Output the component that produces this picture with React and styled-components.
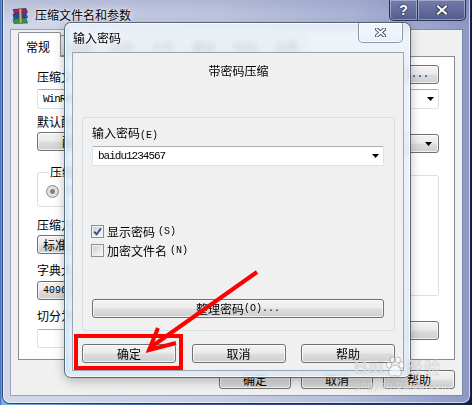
import React from 'react'
import styled, { createGlobalStyle } from 'styled-components'

const GlobalStyle = createGlobalStyle`
  html, body { margin: 0; padding: 0; }
  body {
    width: 472px;
    height: 405px;
    overflow: hidden;
    font-family: "Noto Sans CJK SC", "Liberation Sans", sans-serif;
    font-size: 12px;
    color: #000;
  }
`

const Desktop = styled.div`
  position: relative;
  width: 472px;
  height: 405px;
  overflow: hidden;
  background: linear-gradient(90deg, #2f66bb 0px, #7fb0ea 2px, #4a66a8 30%, #1c2a63 97%, #0f1846 100%);
`

/* ---------- outer WinRAR window ---------- */

const Window = styled.div`
  position: absolute;
  left: 3px;
  top: -8px;
  width: 467px;
  height: 411px;
  box-sizing: border-box;
  display: flex;
  flex-direction: column;
  padding: 0 8px 8px;
  border-radius: 7px;
  background:
    linear-gradient(180deg, rgba(70, 80, 140, 0.25) 0px, rgba(255, 255, 255, 0) 34px),
    linear-gradient(90deg, #d2d8ea 0%, #c8cfe5 45%, #b3bcdb 75%, #8d97c4 100%);
  box-shadow: 0 0 0 1px rgba(30, 40, 75, 0.8), inset 0 0 0 1px rgba(255, 255, 255, 0.6);
`

const TitleBar = styled.div`
  height: 38px;
  flex: none;
  box-sizing: border-box;
  padding-top: 8px;
  display: flex;
  align-items: flex-start;
`

const IconBox = styled.svg`
  margin: 8px 0 0 1px;
  flex: none;
`

const WindowTitle = styled.div`
  margin: 6px 0 0 6px;
  font-size: 12px;
  line-height: 17px;
  text-shadow: 0 0 6px rgba(255, 255, 255, 0.95), 0 0 2px rgba(255, 255, 255, 0.9);
`

const CaptionGroup = styled.div`
  margin-left: auto;
  margin-right: -4px;
  display: flex;
`

const CaptionButton = styled.div`
  width: ${p => p.$w}px;
  height: 21px;
  box-sizing: border-box;
  display: flex;
  align-items: center;
  justify-content: center;
  border: 1px solid rgba(35, 40, 75, 0.85);
  border-top: none;
  border-left-width: ${p => (p.$first ? 1 : 0)}px;
  border-radius: ${p => (p.$first ? '0 0 0 5px' : '0 0 5px 0')};
  background: linear-gradient(180deg, rgba(110, 118, 168, 0.8), rgba(72, 80, 132, 0.85));
  box-shadow: inset 0 0 0 1px rgba(255, 255, 255, 0.35);
  color: #fff;
  font: bold 14px "Liberation Sans", sans-serif;
  text-shadow: 0 0 2px #202840, 0 0 1px #202840;
`

const Client = styled.div`
  flex: 1;
  display: flex;
  flex-direction: column;
  background: #f0f0f0;
  padding: 2px 7px 6px;
  box-shadow: 0 0 0 1px rgba(110, 125, 160, 0.6);
`

const TabStrip = styled.div`
  height: 24px;
  display: flex;
  align-items: flex-end;
  position: relative;
`

const Tab = styled.div`
  position: relative;
  height: ${p => (p.$active ? 25 : 21)}px;
  box-sizing: border-box;
  padding: ${p => (p.$active ? '5px 10px 0 7px' : '2px 8px 0')};
  margin-left: ${p => (p.$active ? 0 : -1)}px;
  border: 1px solid #898c95;
  border-bottom: ${p => (p.$active ? 'none' : '1px solid #898c95')};
  border-radius: 2px 2px 0 0;
  background: ${p => (p.$active ? '#fff' : 'linear-gradient(180deg, #f2f2f2, #dcdcdc)')};
  line-height: 17px;
  margin-bottom: ${p => (p.$active ? -1 : 0)}px;
`

const TabPanel = styled.div`
  flex: 1;
  box-sizing: border-box;
  background: #fff;
  border: 1px solid #898c95;
  padding: 10px 15px 0 18px;
  display: flex;
  flex-direction: column;
`

const TopRow = styled.div`
  height: 17px;
  display: flex;
  justify-content: space-between;
  align-items: flex-end;
`

const Label = styled.div`
  line-height: ${p => p.$lh || 16}px;
  margin-top: ${p => p.$mt || 0}px;
  margin-bottom: ${p => p.$mb || 0}px;
  white-space: nowrap;
`

const Key = styled.span`
  font-family: "Liberation Mono", monospace;
  font-size: 10px;
`

const Columns = styled.div`
  margin-top: 5px;
  display: grid;
  grid-template-columns: 1fr 1fr;
  column-gap: 18px;
`

const Column = styled.div`
  display: flex;
  flex-direction: column;
  align-items: stretch;
  min-width: 0;
`

const Button = styled.div`
  height: 19px;
  width: ${p => (p.$w ? p.$w + 'px' : 'auto')};
  margin-top: ${p => p.$mt || 0}px;
  box-sizing: border-box;
  display: flex;
  align-items: center;
  justify-content: center;
  flex: none;
  border: 1px solid #707070;
  border-radius: 3px;
  background: linear-gradient(180deg, #f3f3f3 0%, #ebebeb 48%, #dddddd 52%, #cfcfcf 100%);
  box-shadow: inset 0 0 0 1px rgba(255, 255, 255, 0.75);
  line-height: 17px;
  white-space: nowrap;
`

const Select = styled(Button)`
  justify-content: space-between;
  padding: 0 6px 0 5px;
`

const Combo = styled.div`
  height: ${p => p.$h || 20}px;
  margin-top: ${p => p.$mt || 0}px;
  box-sizing: border-box;
  display: flex;
  align-items: center;
  justify-content: space-between;
  padding: 0 4px 0 5px;
  background: #fff;
  border: 1px solid #dde2e8;
  border-top-color: #abadb3;
  border-radius: 2px;
  font-family: "Liberation Mono", monospace;
  font-size: 11px;
  letter-spacing: -1px;
`

const Group = styled.fieldset`
  margin: ${p => p.$mt || 0}px 0 0;
  padding: 0 8px;
  height: ${p => p.$h}px;
  box-sizing: border-box;
  border: 1px solid #d5dfe5;
  border-radius: 3px;
  min-width: 0;
`

const Legend = styled.legend`
  padding: 0 2px;
  margin-left: 2px;
  line-height: 14px;
`

const RadioRow = styled.div`
  margin-top: 5px;
  display: flex;
  align-items: center;
  gap: 5px;
  line-height: 14px;
`

const Radio = styled.span`
  width: 13px;
  height: 13px;
  flex: none;
  border-radius: 50%;
  box-sizing: border-box;
  border: 1px solid #8e8f8f;
  background: radial-gradient(circle at 50% 50%, #7d8289 0 2px, #e8e8e8 3px, #c5c8cc 100%);
`

const OptionList = styled.div`
  display: flex;
  flex-direction: column;
  gap: 3px;
  padding-top: 4px;
`

const CheckRow = styled.div`
  display: flex;
  align-items: center;
  gap: 3px;
  height: 16px;
  margin-top: ${p => p.$mt || 0}px;
  margin-left: -1px;
  white-space: nowrap;
`

const Box = styled.span`
  width: 13px;
  height: 13px;
  flex: none;
  box-sizing: border-box;
  border: 1px solid #8e8f8f;
  background: linear-gradient(135deg, #c8ccd1 0%, #e6e7e9 55%, #f7f7f7 100%);
  box-shadow: inset 0 0 0 1px #f3f3f3;
  display: flex;
  align-items: center;
  justify-content: center;
`

const BottomRow = styled.div`
  margin-top: 10px;
  display: flex;
  justify-content: flex-end;
  gap: 10px;
`

/* ---------- password dialog ---------- */

const Dialog = styled.div`
  position: absolute;
  z-index: 2;
  left: 65px;
  top: 23px;
  width: 345px;
  height: 354px;
  box-sizing: border-box;
  display: flex;
  flex-direction: column;
  padding: 0 7px 7px 8px;
  border-radius: 6px;
  background:
    linear-gradient(90deg, rgba(150, 220, 255, 0.45) 0px, rgba(255, 255, 255, 0) 5px),
    linear-gradient(180deg, rgba(236, 243, 250, 0.82) 0%, rgba(220, 233, 246, 0.84) 100%);
  backdrop-filter: blur(3px);
  box-shadow: 0 0 0 1px rgba(75, 85, 100, 0.85), inset 0 0 0 1px rgba(255, 255, 255, 0.75), 0 3px 12px rgba(0, 0, 0, 0.3);
`

const DialogTitleBar = styled.div`
  height: 30px;
  flex: none;
  display: flex;
  align-items: flex-start;
`

const DialogTitle = styled.div`
  margin-top: 6px;
  line-height: 17px;
  text-shadow: 0 0 6px rgba(255, 255, 255, 0.95);
`

const CloseButton = styled.div`
  margin-left: auto;
  width: 45px;
  height: 20px;
  box-sizing: border-box;
  display: flex;
  align-items: center;
  justify-content: center;
  border: 1px solid rgba(90, 100, 115, 0.65);
  border-top: none;
  border-radius: 0 0 5px 5px;
  background: linear-gradient(180deg, rgba(255, 255, 255, 0.55), rgba(225, 238, 250, 0.6));
  box-shadow: inset 0 0 0 1px rgba(255, 255, 255, 0.6);
`

const DialogClient = styled.div`
  flex: 1;
  display: flex;
  flex-direction: column;
  background: #f0f0f0;
  padding: 10px 8px 7px 9px;
  box-shadow: 0 0 0 1px rgba(125, 140, 160, 0.75);
`

const Heading = styled.div`
  text-align: center;
  line-height: 16px;
`

const PasswordGroup = styled.div`
  flex: 1;
  margin-top: 38px;
  display: flex;
  flex-direction: column;
  border: 1px solid #d5dfe5;
  border-radius: 3px;
  padding: 7px 10px 12px 9px;
`

const DialogButtons = styled.div`
  margin-top: 13px;
  display: flex;
  justify-content: space-between;
`

/* ---------- overlays ---------- */

const Annotation = styled.svg`
  position: absolute;
  z-index: 3;
  left: 0;
  top: 0;
  pointer-events: none;
`

const Watermark = styled.div`
  position: absolute;
  z-index: 3;
  left: 354px;
  top: 354px;
  display: flex;
  flex-direction: column;
  color: rgba(255, 255, 255, 0.6);
  text-shadow: 0 0 1px rgba(110, 110, 110, 0.55);
  pointer-events: none;
`

const MarkTop = styled.div`
  display: flex;
  align-items: center;
  font: bold 19px "Liberation Sans", sans-serif;
  line-height: 24px;
`

const MarkCn = styled.span`
  font: 17px "Noto Sans CJK SC", sans-serif;
  margin-left: 1px;
`

const MarkUrl = styled.div`
  font: 11px "Liberation Sans", sans-serif;
  letter-spacing: 0.4px;
  line-height: 12px;
  margin-left: 1px;
`

const Arrow = () => (
  <svg width="7" height="4" viewBox="0 0 7 4">
    <path d="M0 0h7L3.5 4z" fill="#000" />
  </svg>
)

const Check = () => (
  <svg width="9" height="9" viewBox="0 0 9 9">
    <path d="M1.2 4.6 L3.6 7.3 L8 1.2" fill="none" stroke="#30468a" strokeWidth="1.7" />
  </svg>
)

const XGlyph = ({ size = 10 }) => (
  <svg width={size + 2} height={size} viewBox="0 0 12 10">
    <path d="M2 1.5 L10 8.5 M10 1.5 L2 8.5" stroke="#3c4150" strokeWidth="4" strokeLinecap="square" />
    <path d="M2 1.5 L10 8.5 M10 1.5 L2 8.5" stroke="#fff" strokeWidth="2" strokeLinecap="square" />
  </svg>
)

const AppIcon = () => (
  <IconBox width="17" height="16" viewBox="0 0 17 16">
    <path d="M1 1.5 L14 0.5 L15.5 4.5 L2.5 5.5 Z" fill="#a81d5c" stroke="#4a1030" strokeWidth="0.6" />
    <path d="M1 6 L14 5.2 L15.5 9.8 L2 10.5 Z" fill="#2747a8" stroke="#15235a" strokeWidth="0.6" />
    <path d="M1 11 L14 10.4 L15.5 15 L2 15.5 Z" fill="#2c9a4c" stroke="#13502a" strokeWidth="0.6" />
    <path d="M7 0.8 L9.5 0.7 L10 15.2 L7.5 15.4 Z" fill="#c9b27a" stroke="#6a5426" strokeWidth="0.5" />
  </IconBox>
)

const Paw = () => (
  <svg width="22" height="22" viewBox="0 0 22 22">
    <g fill="rgba(255,255,255,0.6)" stroke="rgba(120,120,120,0.5)" strokeWidth="0.8">
      <ellipse cx="5" cy="9" rx="2.6" ry="3.2" />
      <ellipse cx="8.5" cy="4" rx="2.4" ry="3" />
      <ellipse cx="14" cy="4" rx="2.4" ry="3" />
      <ellipse cx="17.5" cy="9" rx="2.6" ry="3.2" />
      <path d="M11 9 C7 9 4 15 5 18 C6 21 9 20 11 19.5 C13 20 16 21 17 18 C18 15 15 9 11 9 Z" />
    </g>
  </svg>
)

const rightOptions = [
  '压缩后删除原文件',
  '创建自解压文件',
  '创建固实压缩文件',
  '添加恢复记录',
  '测试压缩文件',
  '锁定压缩文件'
]

export default function App() {
  return (
    <>
      <GlobalStyle />
      <Desktop>
        <Window>
          <TitleBar>
            <AppIcon />
            <WindowTitle>压缩文件名和参数</WindowTitle>
            <CaptionGroup>
              <CaptionButton $w={29} $first>?</CaptionButton>
              <CaptionButton $w={48}>
                <XGlyph size={10} />
              </CaptionButton>
            </CaptionGroup>
          </TitleBar>

          <Client>
            <TabStrip>
              <Tab $active>常规</Tab>
              {['高级', '选项', '文件', '备份', '时间', '注释'].map(t => (
                <Tab key={t}>{t}</Tab>
              ))}
            </TabStrip>

            <TabPanel>
              <TopRow>
                <Label $mb={-4}>压缩文件名<Key>(A)</Key></Label>
                <Button $w={80}>浏览<Key>(B)...</Key></Button>
              </TopRow>
              <Combo $mt={5}>
                <span>WinRAR.rar</span>
                <Arrow />
              </Combo>

              <Columns>
                <Column>
                  <Label>默认配置</Label>
                  <Button $mt={2} $w={110}>配置<Key>(F)...</Key></Button>
                  <Group $mt={14} $h={42}>
                    <Legend>压缩文件格式</Legend>
                    <RadioRow>
                      <Radio />
                      <Key>RAR</Key>
                      <Radio />
                      <Key>ZIP</Key>
                    </RadioRow>
                  </Group>
                  <Label $lh={15} $mt={10}>压缩方式<Key>(C)</Key></Label>
                  <Select>标准<Arrow /></Select>
                  <Label $lh={15} $mt={8}>字典大小<Key>(I)</Key></Label>
                  <Select $mt={1}><Key>4096 KB</Key><Arrow /></Select>
                  <Label $lh={15} $mt={8}>切分为分卷<Key>(V)</Key>，大小</Label>
                  <Combo $mt={3} $h={19}>
                    <span />
                    <Arrow />
                  </Combo>
                </Column>

                <Column>
                  <Label>更新方式<Key>(U)</Key></Label>
                  <Select $mt={1}>添加并替换文件<Arrow /></Select>
                  <Group $mt={15} $h={128}>
                    <Legend>压缩选项</Legend>
                    <OptionList>
                      {rightOptions.map(o => (
                        <CheckRow key={o}>
                          <Box />
                          {o}
                        </CheckRow>
                      ))}
                    </OptionList>
                  </Group>
                  <Button $mt={25}>设置密码<Key>(P)...</Key></Button>
                </Column>
              </Columns>
            </TabPanel>

            <BottomRow>
              <Button $w={72}>确定</Button>
              <Button $w={72}>取消</Button>
              <Button $w={72}>帮助</Button>
            </BottomRow>
          </Client>
        </Window>

        <Dialog>
          <DialogTitleBar>
            <DialogTitle>输入密码</DialogTitle>
            <CloseButton>
              <XGlyph size={9} />
            </CloseButton>
          </DialogTitleBar>

          <DialogClient>
            <Heading>带密码压缩</Heading>
            <PasswordGroup>
              <Label>输入密码<Key>(E)</Key></Label>
              <Combo $mt={2}>
                <span>baidu1234567</span>
                <Arrow />
              </Combo>
              <CheckRow $mt={57}>
                <Box><Check /></Box>
                显示密码<Key>(S)</Key>
              </CheckRow>
              <CheckRow $mt={3}>
                <Box />
                加密文件名<Key>(N)</Key>
              </CheckRow>
              <Button style={{ marginTop: 'auto' }}>整理密码<Key>(O)...</Key></Button>
            </PasswordGroup>
            <DialogButtons>
              <Button $w={94}>确定</Button>
              <Button $w={94}>取消</Button>
              <Button $w={94}>帮助</Button>
            </DialogButtons>
          </DialogClient>
        </Dialog>

        <Watermark>
          <MarkTop>
            Bai
            <Paw />
            <MarkCn>经验</MarkCn>
          </MarkTop>
          <MarkUrl>jingyan.baidu.com</MarkUrl>
        </Watermark>

        <Annotation width="472" height="405" viewBox="0 0 472 405">
          <rect x="76" y="336" width="105" height="32" fill="none" stroke="#ff0000" strokeWidth="4" />
          <path d="M257 272 L151 347" stroke="#ff0000" strokeWidth="4" fill="none" />
          <path d="M158 328 L149 350 L176 343" stroke="#ff0000" strokeWidth="4" fill="none" strokeLinejoin="miter" />
        </Annotation>
      </Desktop>
    </>
  )
}
